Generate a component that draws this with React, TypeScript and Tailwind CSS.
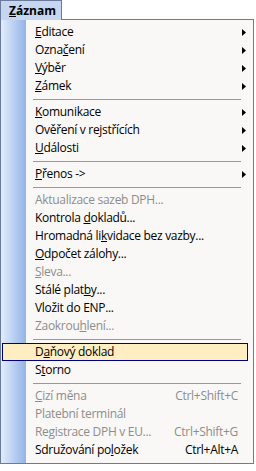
import clsx from 'clsx';

type Item =
  | { sep: true }
  | {
      sep?: false;
      label: React.ReactNode;
      arrow?: boolean;
      shortcut?: string;
      disabled?: boolean;
      active?: boolean;
    };

const items: Item[] = [
  { label: <><u>E</u>ditace</>, arrow: true },
  { label: <>Ozna<u>č</u>ení</>, arrow: true },
  { label: <><u>V</u>ýběr</>, arrow: true },
  { label: <><u>Z</u>ámek</>, arrow: true },
  { sep: true },
  { label: <><u>K</u>omunikace</>, arrow: true },
  { label: <>Ověření v rejstřících</>, arrow: true },
  { label: <><u>U</u>dálosti</>, arrow: true },
  { sep: true },
  { label: <><u>P</u>řenos -&gt;</>, arrow: true },
  { sep: true },
  { label: <>Aktualizace sazeb DPH...</>, disabled: true },
  { label: <>Kontrola <u>d</u>okladů...</> },
  { label: <>Hromadná li<u>k</u>vidace bez vazby...</> },
  { label: <><u>O</u>dpočet zálohy...</> },
  { label: <><u>S</u>leva...</>, disabled: true },
  { label: <>Stálé plat<u>b</u>y...</> },
  { label: <>Vložit do ENP...</> },
  { label: <>Zaokrou<u>h</u>lení...</>, disabled: true },
  { sep: true },
  { label: <>D<u>a</u>ňový doklad</>, active: true },
  { label: <>S<u>t</u>orno</> },
  { sep: true },
  { label: <><u>C</u>izí měna</>, shortcut: 'Ctrl+Shift+C', disabled: true },
  { label: <>Platební terminál</>, disabled: true },
  { label: <>Registrace DPH v EU...</>, shortcut: 'Ctrl+Shift+G', disabled: true },
  { label: <>Sdružování po<u>l</u>ožek</>, shortcut: 'Ctrl+Alt+A' },
];

function Arrow() {
  return (
    <svg width="4" height="7" viewBox="0 0 4 7" className="ml-auto mr-[1px]">
      <path d="M0 0 L4 3.5 L0 7 Z" fill="#000" />
    </svg>
  );
}

export default function App() {
  return (
    <div className="w-[256px] h-[471px] bg-white font-['Open_Sans','Noto_Sans',sans-serif] text-[12px] leading-none tracking-[-0.3px] text-black">
      {/* Menu header */}
      <div className="relative z-10 -mb-px flex h-[20px] w-[62px] items-center border border-b-0 border-[#6b7b9c] bg-[#c6d6f0] pl-[8px] font-bold tracking-normal">
        <span><u>Z</u>áznam</span>
      </div>

      {/* Dropdown */}
      <div className="w-[254px] border border-[#6b7b9c] bg-[linear-gradient(to_right,#e3edfc_0px,#93b3e7_25px,#f9f8f7_25px)] pt-[3px] pb-[4px]">
        {items.map((it, i) =>
          it.sep ? (
            <div key={i} className="h-[8px] pt-[4px]">
              <div className="ml-[32px] h-px w-[208px] bg-[#7f9bd0]" />
            </div>
          ) : (
            <div
              key={i}
              className={clsx(
                'ml-px mr-[5px] flex h-[18px] items-center pr-[1px] whitespace-nowrap',
                it.active ? 'border border-[#000080] bg-[#ffeec2] pl-[32px]' : 'pl-[33px]',
                it.disabled ? 'text-[#8d8d8d]' : 'text-black'
              )}
            >
              <span>{it.label}</span>
              {it.shortcut && <span className="ml-auto mr-[9px]">{it.shortcut}</span>}
              {it.arrow && <Arrow />}
            </div>
          )
        )}
      </div>
    </div>
  );
}
